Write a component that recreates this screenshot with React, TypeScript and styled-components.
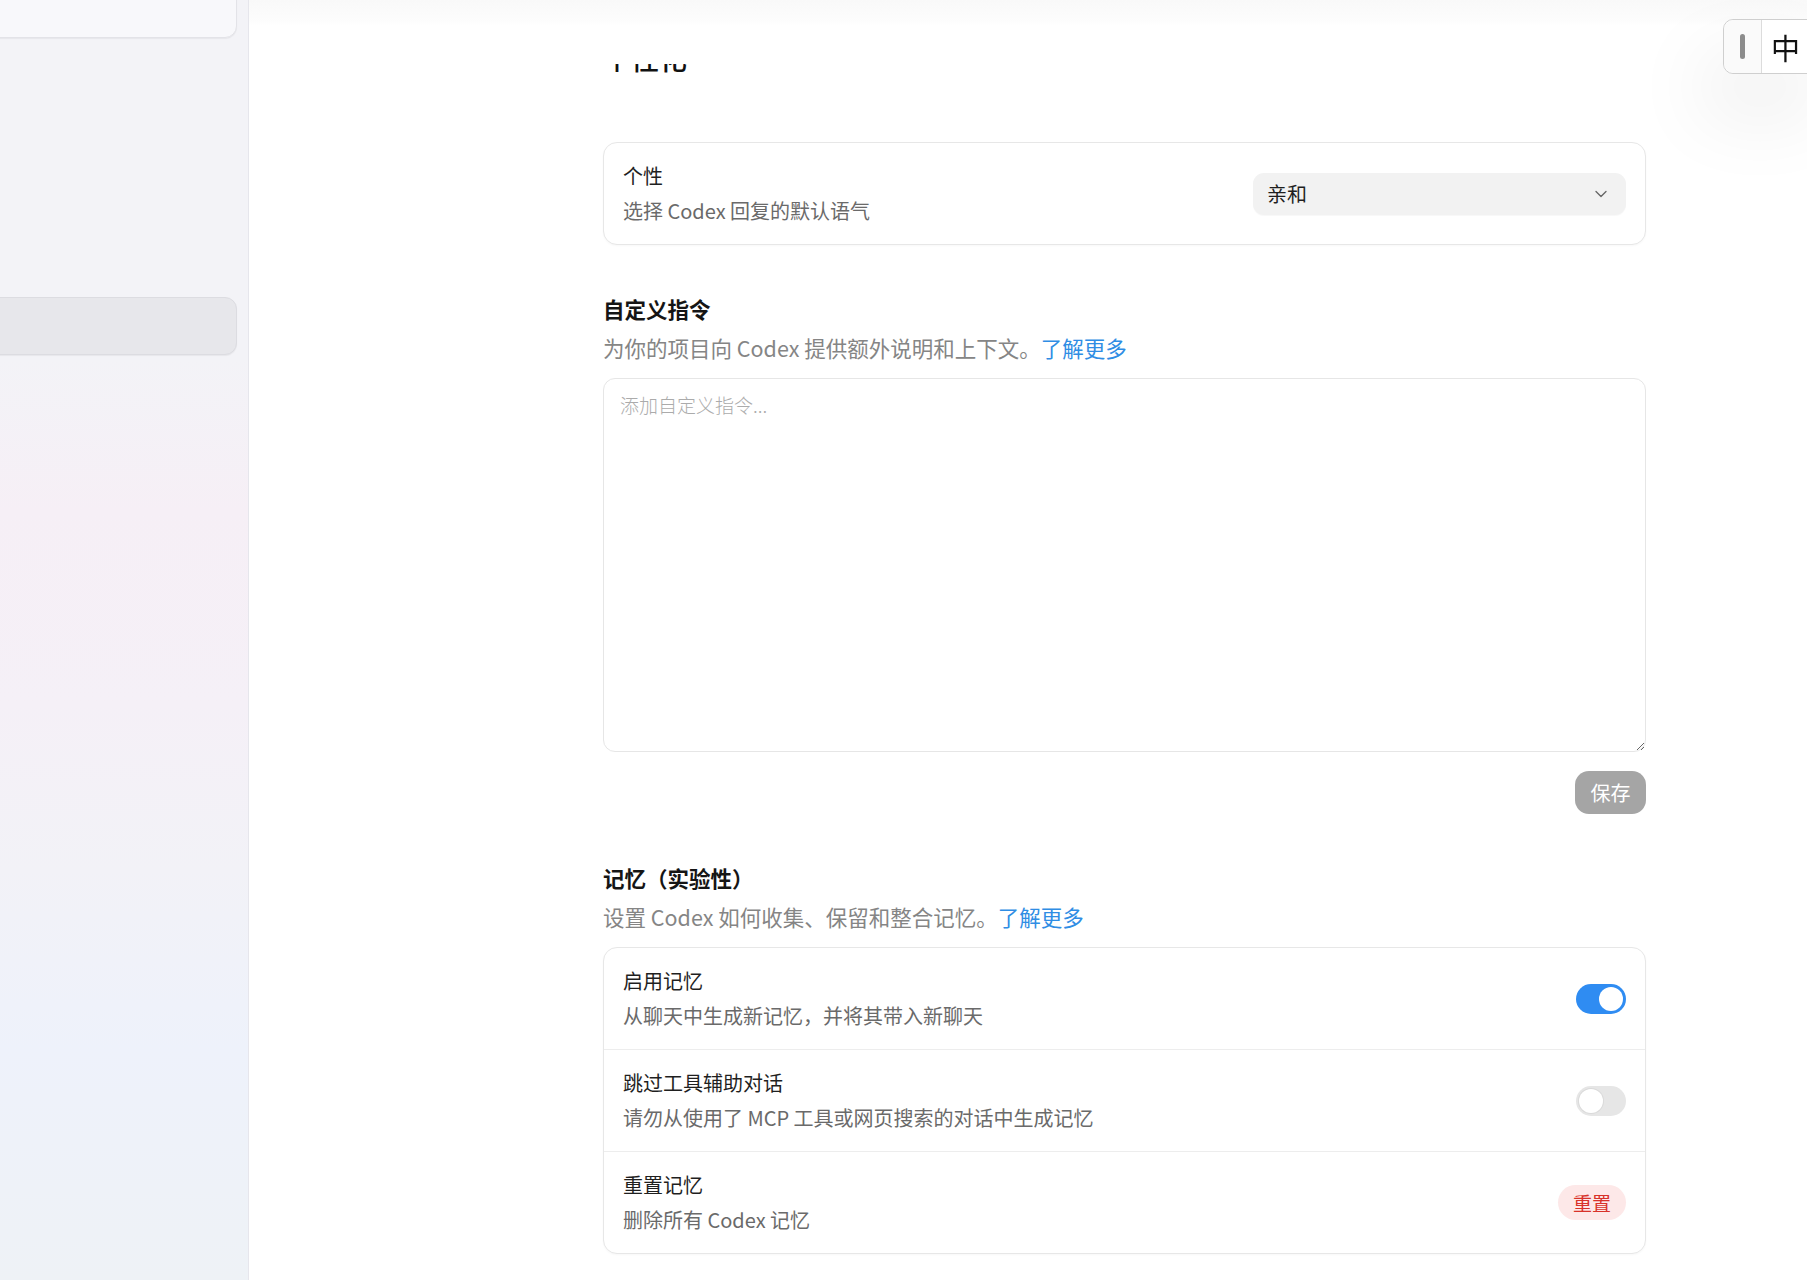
import React, { useLayoutEffect, useRef } from "react";
import styled, { createGlobalStyle } from "styled-components";
import { ChevronDown } from "lucide-react";

const GlobalStyle = createGlobalStyle`
  html, body {
    margin: 0;
    padding: 0;
    height: 100%;
    background: #ffffff;
  }
  body {
    font-family: "Noto Sans CJK SC", "Noto Sans", sans-serif;
    color: #1f1f1f;
  }
  * {
    box-sizing: border-box;
  }
`;

const Shell = styled.div`
  display: flex;
  height: 100vh;
  overflow: hidden;
  background: #ffffff;
`;

const Sidebar = styled.aside`
  width: 249px;
  flex-shrink: 0;
  display: flex;
  flex-direction: column;
  overflow: hidden;
  border-right: 1px solid #e6e6ec;
  background: linear-gradient(
    180deg,
    #f3f3f7 0%,
    #f3f3f7 28%,
    #f6eff6 40%,
    #f5f0f7 55%,
    #f2f2f7 68%,
    #eef2fb 82%,
    #eef2f6 100%
  );
`;

const SideTile = styled.div<{ $active?: boolean; $gap: number }>`
  margin-top: ${(p) => p.$gap}px;
  margin-left: -20px;
  width: 257px;
  height: 58px;
  flex-shrink: 0;
  border-radius: 12px;
  background: ${(p) => (p.$active ? "#e7e7eb" : "#f8f8fb")};
  border: 1px solid ${(p) => (p.$active ? "#dcdce1" : "#e3e3e8")};
  box-shadow: 0 1px 1px rgba(0, 0, 0, 0.05);
`;

const Main = styled.main`
  flex: 1;
  min-width: 0;
  position: relative;
`;

const Scroller = styled.div`
  height: 100%;
  overflow-y: auto;
  scrollbar-width: none;
  &::-webkit-scrollbar {
    display: none;
  }
`;

const TopBar = styled.div`
  position: sticky;
  top: 0;
  z-index: 2;
  height: 64px;
  background: linear-gradient(180deg, #f9f9f9 0px, #fdfdfd 22px, #ffffff 26px);
`;

const Content = styled.div`
  width: 1397px;
  padding: 74px 0 120px 354px;
  display: flex;
  flex-direction: column;
`;

const PageTitle = styled.h1`
  margin: 0 0 64px;
  font-size: 28px;
  line-height: 40px;
  font-weight: 500;
  color: #111111;
`;

const Card = styled.div`
  border: 1px solid #e7e7e7;
  border-radius: 14px;
  background: #ffffff;
  box-shadow: 0 1px 2px rgba(0, 0, 0, 0.03);
  display: flex;
  flex-direction: column;
`;

const Row = styled.div`
  display: flex;
  align-items: center;
  justify-content: space-between;
  padding: 18px 19px 18px 19px;
  & + & {
    border-top: 1px solid #ededed;
  }
`;

const RowText = styled.div`
  display: flex;
  flex-direction: column;
  gap: 5px;
`;

const RowLabel = styled.div`
  font-size: 20px;
  line-height: 30px;
  color: #1f1f1f;
`;

const RowDesc = styled.div`
  font-size: 20px;
  line-height: 30px;
  color: #6a6a6a;
`;

const Select = styled.div`
  width: 373px;
  height: 42px;
  border-radius: 11px;
  background: #f2f2f2;
  display: flex;
  align-items: center;
  justify-content: space-between;
  padding: 0 15px 0 14px;
  font-size: 20px;
  color: #1f1f1f;
  box-shadow: 0 1px 1px rgba(0, 0, 0, 0.03);
`;

const SectionTitle = styled.h2<{ $top: number }>`
  margin: ${(p) => p.$top}px 0 0;
  font-size: 21.5px;
  line-height: 30px;
  font-weight: 600;
  color: #151515;
`;

const SectionDesc = styled.p`
  margin: 9px 0 0;
  font-size: 21.5px;
  line-height: 30px;
  color: #858585;
`;

const Link = styled.a`
  color: #2f8de4;
  text-decoration: none;
`;

const Instructions = styled.textarea`
  margin-top: 15px;
  width: 100%;
  height: 374px;
  border: 1px solid #e6e6e6;
  border-radius: 12px;
  padding: 12px 16px;
  font-family: "Noto Sans CJK SC", sans-serif;
  font-size: 19px;
  line-height: 28px;
  color: #1f1f1f;
  resize: vertical;
  outline: none;
  &::placeholder {
    color: #ababab;
    font-weight: 300;
  }
`;

const Actions = styled.div`
  margin-top: 19px;
  display: flex;
  justify-content: flex-end;
`;

const SaveButton = styled.button`
  width: 71px;
  height: 43px;
  border: none;
  border-radius: 14px;
  background: #a5a5a5;
  color: #ffffff;
  font-family: inherit;
  font-size: 20px;
`;

const MemoryCard = styled(Card)`
  margin-top: 15px;
`;

const Toggle = styled.span<{ $on?: boolean }>`
  width: 50px;
  height: 30px;
  border-radius: 15px;
  padding: 3px;
  display: flex;
  justify-content: ${(p) => (p.$on ? "flex-end" : "flex-start")};
  background: ${(p) => (p.$on ? "#2f8cf2" : "#e6e6e6")};
  &::after {
    content: "";
    width: 24px;
    height: 24px;
    border-radius: 50%;
    background: #ffffff;
    box-shadow: ${(p) => (p.$on ? "none" : "0 0 0 1px #dadada")};
  }
`;

const DangerButton = styled.button`
  width: 68px;
  height: 35px;
  border: none;
  border-radius: 18px;
  background: #fde8e8;
  color: #d8322a;
  font-family: inherit;
  font-size: 19px;
`;

const Ime = styled.div`
  position: fixed;
  top: 19px;
  right: -30px;
  width: 114px;
  height: 55px;
  display: flex;
  border: 1px solid #cfcfcf;
  border-radius: 10px;
  background: #ffffff;
  box-shadow: -20px 40px 80px rgba(0, 0, 0, 0.08);
  z-index: 5;
`;

const ImeHandle = styled.div`
  width: 38px;
  display: flex;
  align-items: center;
  justify-content: center;
  border-right: 1px solid #dcdcdc;
  background: #fafafa;
  border-radius: 10px 0 0 10px;
  &::before {
    content: "";
    width: 5px;
    height: 25px;
    border-radius: 3px;
    background: #8c8c8c;
  }
`;

const ImeMode = styled.div`
  padding-left: 9px;
  display: flex;
  align-items: center;
  font-size: 29px;
  color: #111111;
`;

export default function App() {
  const scrollRef = useRef<HTMLDivElement>(null);

  useLayoutEffect(() => {
    if (scrollRef.current) scrollRef.current.scrollTop = 100;
  }, []);

  return (
    <>
      <GlobalStyle />
      <Shell>
        <Sidebar>
          <SideTile $gap={-20} />
          <SideTile $gap={259} $active />
        </Sidebar>
        <Main>
          <Scroller ref={scrollRef}>
            <TopBar />
            <Content>
              <PageTitle>个性化</PageTitle>

              <Card>
                <Row>
                  <RowText>
                    <RowLabel>个性</RowLabel>
                    <RowDesc>选择 Codex 回复的默认语气</RowDesc>
                  </RowText>
                  <Select>
                    <span>亲和</span>
                    <ChevronDown size={20} strokeWidth={1.6} color="#666" />
                  </Select>
                </Row>
              </Card>

              <SectionTitle $top={49}>自定义指令</SectionTitle>
              <SectionDesc>
                为你的项目向 Codex 提供额外说明和上下文。
                <Link href="#">了解更多</Link>
              </SectionDesc>
              <Instructions placeholder="添加自定义指令..." />
              <Actions>
                <SaveButton>保存</SaveButton>
              </Actions>

              <SectionTitle $top={49}>记忆（实验性）</SectionTitle>
              <SectionDesc>
                设置 Codex 如何收集、保留和整合记忆。
                <Link href="#">了解更多</Link>
              </SectionDesc>
              <MemoryCard>
                <Row>
                  <RowText>
                    <RowLabel>启用记忆</RowLabel>
                    <RowDesc>从聊天中生成新记忆，并将其带入新聊天</RowDesc>
                  </RowText>
                  <Toggle $on />
                </Row>
                <Row>
                  <RowText>
                    <RowLabel>跳过工具辅助对话</RowLabel>
                    <RowDesc>请勿从使用了 MCP 工具或网页搜索的对话中生成记忆</RowDesc>
                  </RowText>
                  <Toggle />
                </Row>
                <Row>
                  <RowText>
                    <RowLabel>重置记忆</RowLabel>
                    <RowDesc>删除所有 Codex 记忆</RowDesc>
                  </RowText>
                  <DangerButton>重置</DangerButton>
                </Row>
              </MemoryCard>
            </Content>
          </Scroller>
        </Main>
      </Shell>
      <Ime>
        <ImeHandle />
        <ImeMode>中</ImeMode>
      </Ime>
    </>
  );
}
